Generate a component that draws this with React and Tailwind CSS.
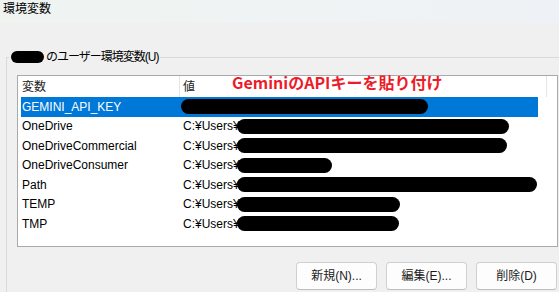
const ROWS = [
  { name: 'GEMINI_API_KEY', prefix: '', blob: 247, selected: true },
  { name: 'OneDrive', prefix: 'C:¥Users¥', blob: 272 },
  { name: 'OneDriveCommercial', prefix: 'C:¥Users¥', blob: 270 },
  { name: 'OneDriveConsumer', prefix: 'C:¥Users¥', blob: 95 },
  { name: 'Path', prefix: 'C:¥Users¥', blob: 300 },
  { name: 'TEMP', prefix: 'C:¥Users¥', blob: 163 },
  { name: 'TMP', prefix: 'C:¥Users¥', blob: 162 },
];

const BUTTONS = ['新規(N)...', '編集(E)...', '削除(D)'];

const App = () => {
  return (
    <div className="w-[559px] h-[292px] overflow-hidden bg-[#f0f0f0] text-black text-[12px] font-['Liberation_Sans','Noto_Sans_CJK_JP',sans-serif]">
      {/* title bar */}
      <div className="h-[23px] pl-[3px] pt-[1px] leading-[16px] bg-gradient-to-r from-[#eff4f1] to-[#eef2f6]">
        環境変数
      </div>

      <fieldset className="mt-[26px] ml-[6px] w-[560px] border-t border-l border-[#d9d9d9] pb-[10px]">
        <legend className="ml-[2px] px-[2px] leading-[16px]">
          <span className="flex items-center">
            <span className="inline-block w-[33px] h-[12px] rounded-full bg-black" />
            <span className="ml-[2px] tracking-[-1px]">のユーザー環境変数(U)</span>
          </span>
        </legend>

        <div className="pl-[10px] pt-[10px]">
          <div className="relative w-[541px] h-[172px] border border-[#a9a9a9] bg-white">
            {/* header */}
            <div className="flex h-[21px] items-center">
              <div className="w-[162px] h-full flex items-center pl-[4px] border-r border-[#e5e5e5] text-[#222]">変数</div>
              <div className="w-[367px] h-full flex items-center pl-[3px] border-r border-[#e5e5e5] text-[#222]">値</div>
            </div>

            {ROWS.map((r) => (
              <div
                key={r.name}
                className={`ml-[3px] w-[517px] h-[19.5px] flex items-center ${r.selected ? 'bg-[#0078d7] text-white' : ''}`}
              >
                <div className="w-[160px] pl-[1px] whitespace-nowrap">{r.name}</div>
                <div className="flex items-center pl-[2px] whitespace-nowrap">
                  {r.prefix && <span>{r.prefix}</span>}
                  <span
                    className={`inline-block h-[15px] rounded-full bg-black ${r.prefix ? '-ml-[3px]' : '-ml-[2px]'}`}
                    style={{ width: r.blob }}
                  />
                </div>
              </div>
            ))}

            {/* annotation */}
            <div className="absolute left-[214px] top-[-2px] leading-none text-[16px] font-bold text-[#ec1c2a] whitespace-nowrap font-['Noto_Sans_CJK_JP',sans-serif]">
              GeminiのAPIキーを貼り付け
            </div>
          </div>

          <div className="mt-[15px] w-[541px] flex justify-end gap-[9px] pr-[1px]">
            {BUTTONS.map((b) => (
              <button
                key={b}
                className="w-[81px] h-[28px] rounded-[4px] border border-[#d0d0d0] border-b-[#bdbdbd] bg-[#fdfdfd] text-[#1b1b1b] text-[12px] leading-none"
              >
                {b}
              </button>
            ))}
          </div>
        </div>
      </fieldset>
    </div>
  );
};

export default App;
